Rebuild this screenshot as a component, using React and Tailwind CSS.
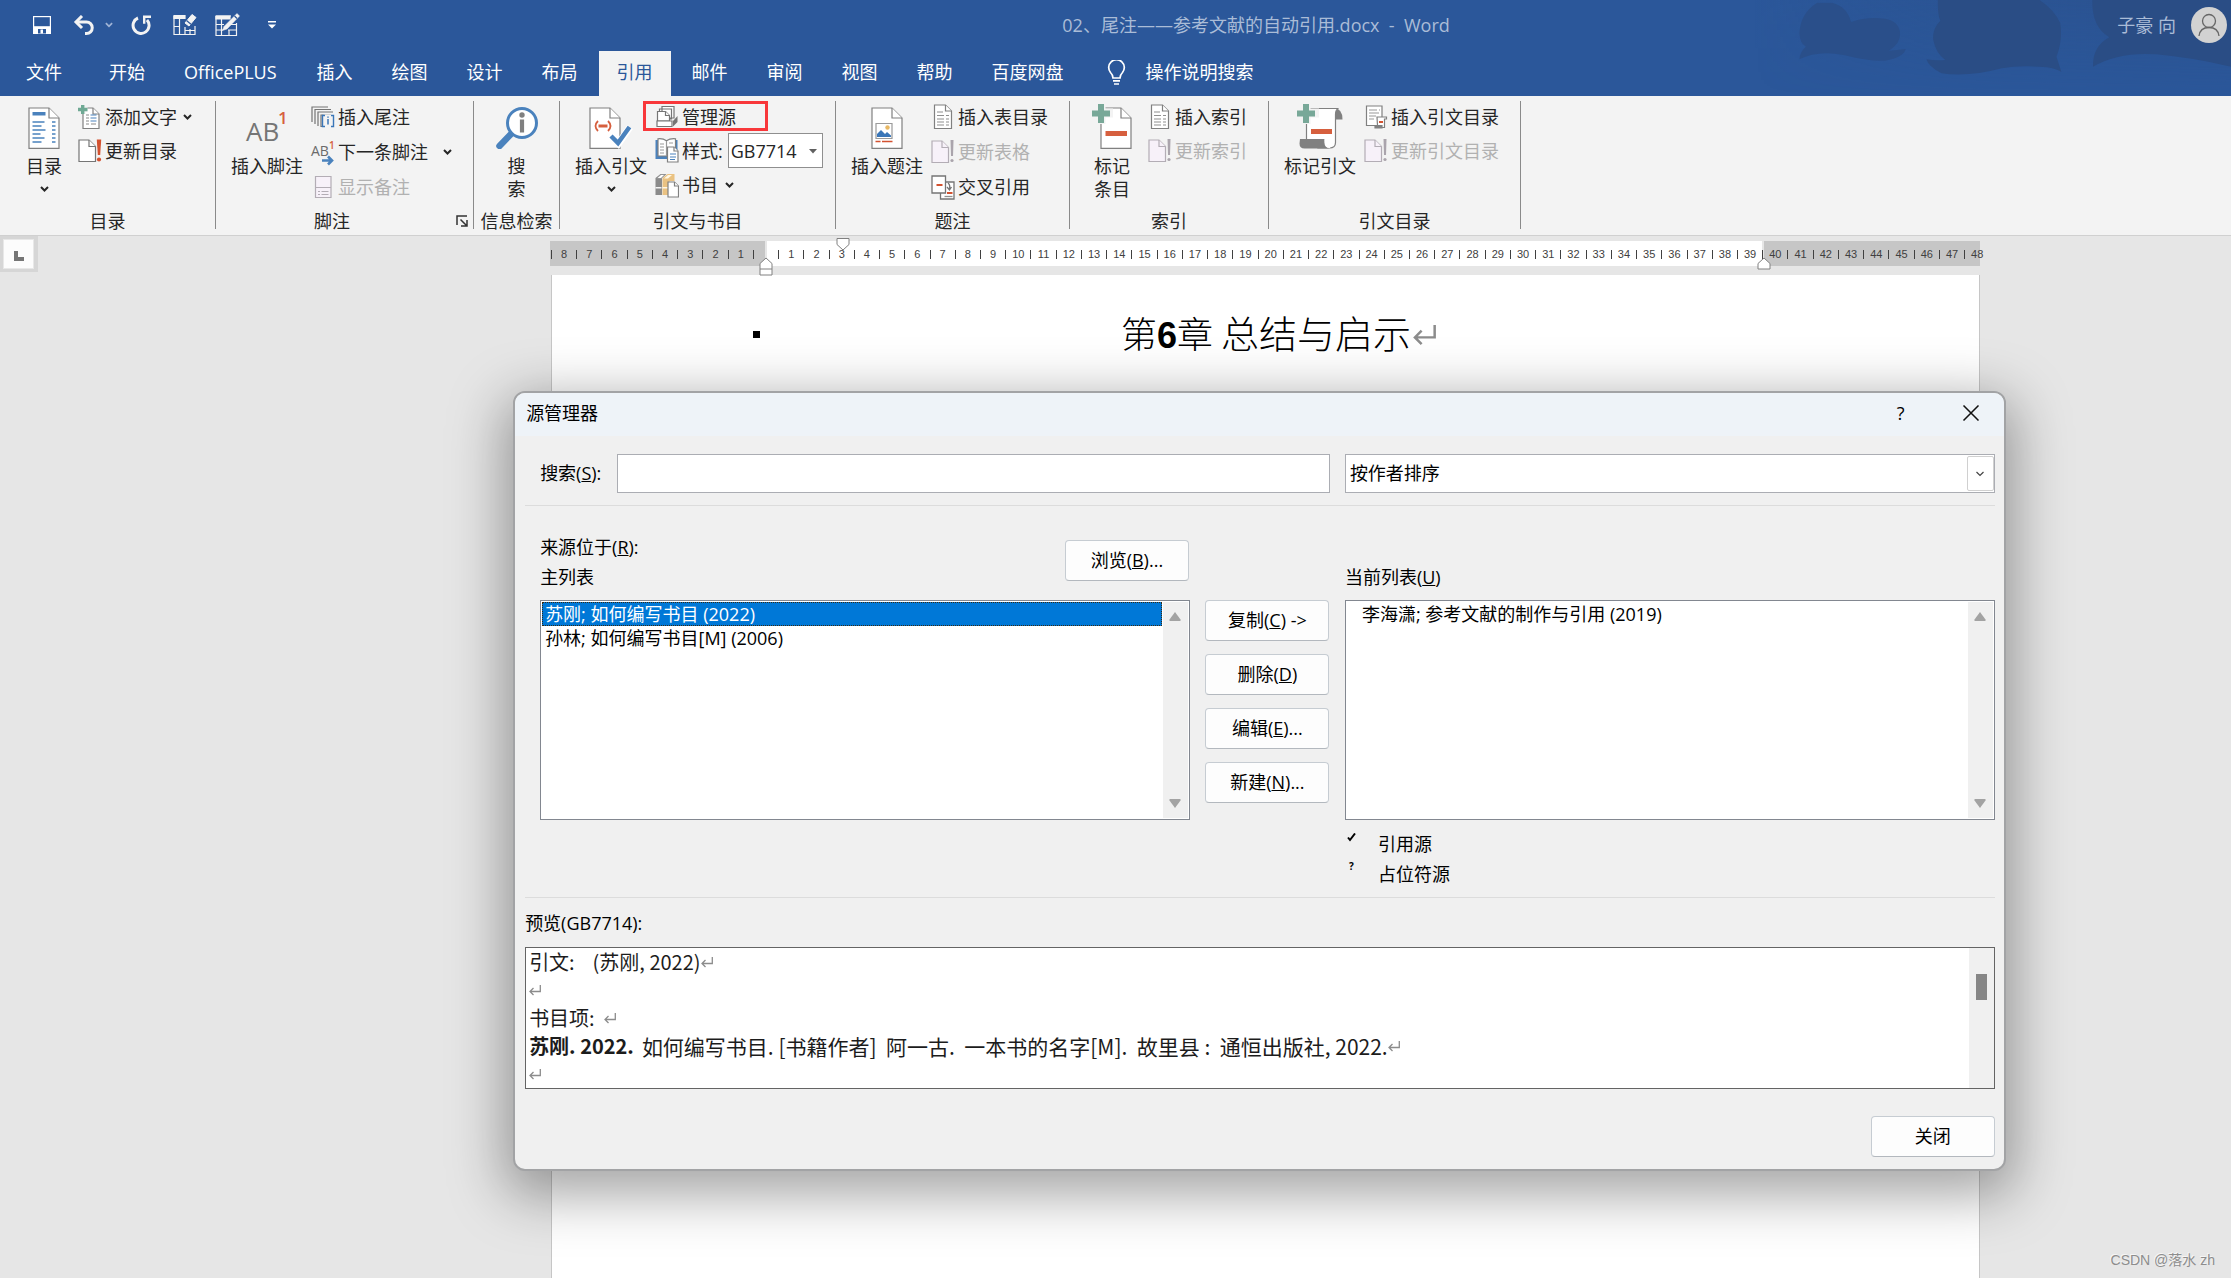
import React from "react";

const FONT = "font-['Open_Sans','Noto_Sans_CJK_SC',sans-serif]";

/* ---------- small drawings ---------- */

function Chevron({ className = "", w = 9, stroke = "currentColor", sw = 2 }) {
  return (
    <svg width={w} height="6" viewBox="0 0 9 6" fill="none" stroke={stroke} strokeWidth={sw} className={className} aria-hidden="true">
      <path d="M1 1l3.500 3.500L8 1" />
    </svg>
  );
}

function ReturnMark({ size = 12, className = "" }) {
  return (
    <svg width={size} height={size} viewBox="0 0 12 12" fill="none" stroke="#8c8c8c" strokeWidth="1.3" className={"inline-block shrink-0 " + className} aria-hidden="true">
      <path d="M11.300 1v6.500H1M4.500 4L1 7.500 4.500 11" />
    </svg>
  );
}

function SaveIcon() {
  return (
    <svg width="20" height="20" viewBox="0 0 20 20" aria-hidden="true">
      <path d="M1 1h18v18H1z" fill="#fff" stroke="none" />
      <path d="M2.200 2.200h15.600v9H2.200z" fill="#2b579a" />
      <path d="M6 14h8v4.500H6z" fill="#2b579a" />
      <path d="M8.500 14.500h2.500v4H8.500z" fill="#fff" />
    </svg>
  );
}

function UndoIcon() {
  return (
    <svg width="22" height="20" viewBox="0 0 22 20" fill="none" stroke="#f3f3f3" strokeWidth="3" aria-hidden="true">
      <path d="M3 7h10.500a5.500 5.500 0 0 1 0 11.500H12" />
      <path d="M9 1L3 7l6 6" />
    </svg>
  );
}

function RedoIcon() {
  return (
    <svg width="21" height="20" viewBox="0 0 21 20" fill="none" stroke="#f3f3f3" strokeWidth="3" aria-hidden="true">
      <path d="M7 3a8 8 0 1 0 9 2" />
      <path d="M20 1.800h-6.800v7" strokeWidth="2.400" />
    </svg>
  );
}

function TableEraserIcon() {
  return (
    <svg width="24" height="23" viewBox="0 0 24 23" fill="none" stroke="#f3f3f3" strokeWidth="1.200" aria-hidden="true">
      <path d="M1 3v18.500h21V13M1 3h11" />
      <path d="M1 2.500h11v3H1z" fill="#f3f3f3" />
      <path d="M6.500 5v16M12 14v7.500M17 16v5.500M12 17.500h10M1 13.500h5.500" />
      <path d="M12 10l7-8.500 4 3-7 8.500z" fill="#f3f3f3" strokeWidth="1" />
      <path d="M13.500 7.500l4.500 3.700" stroke="#2b579a" />
    </svg>
  );
}

function TablePenIcon() {
  return (
    <svg width="25" height="24" viewBox="0 0 25 24" fill="none" stroke="#f3f3f3" strokeWidth="1.200" aria-hidden="true">
      <path d="M1 3v19.500h20.500V10M1 3h15" />
      <path d="M1 3h14v3H1z" fill="#f3f3f3" />
      <path d="M1 11.500h8M1 17h7M6.500 6v16M14 17v5.500M16 11.500h5M13 17h8" />
      <path d="M22 .5l2.500 2.500-12.500 13-4.500 1.500 1.500-4z" fill="#f3f3f3" strokeWidth=".5" />
      <path d="M19.500 3l2.500 2.500" stroke="#2b579a" />
    </svg>
  );
}

function Page({ x, y, w, h, f, fill = "#fff", stroke = "#808080" }) {
  return (
    <g fill={fill} stroke={stroke} strokeWidth="1.2">
      <path d={`M${x} ${y}H${x + w - f}L${x + w} ${y + f}V${y + h}H${x}Z`} />
      <path d={`M${x + w - f} ${y}V${y + f}H${x + w}`} />
    </g>
  );
}

function TocIcon() {
  const rows = [21, 25, 29, 33, 37, 41];
  const lens = [12, 9, 13, 8, 12, 9];
  return (
    <svg width="32" height="48" viewBox="0 0 32 48" aria-hidden="true">
      <Page x={1} y={7} w={30} h={40.400} f={10} />
      <path d="M4.500 11h13v3.500h-13z" fill="#4a82bd" />
      {rows.map((y, i) => (
        <path key={y} d={`M4.500 ${y}h${lens[i]}M24 ${y}h3.500`} stroke="#4a82bd" strokeWidth="1.300" />
      ))}
    </svg>
  );
}

function AddTextIcon() {
  return (
    <svg width="24" height="26" viewBox="0 0 24 26" aria-hidden="true">
      <Page x={5} y={4} w={16} h={20.500} f={6} />
      <path d="M8 11h3M8 14h3M8 17h3M8 20h3M13 20h5" stroke="#8a8a8a" strokeWidth="1.2" />
      <path d="M12.500 11h6M12.500 14h6M12.500 17h6" stroke="#4a82bd" strokeWidth="1.2" />
      <path d="M4.500 0v10M0 5h9.500" stroke="#f3f3f3" strokeWidth="6" />
      <path d="M4.700 1v9M0 5.500h9.500" stroke="#6fa994" strokeWidth="3.400" />
    </svg>
  );
}

function UpdateIcon({ off }) {
  return (
    <svg width="24" height="24" viewBox="0 0 24 24" aria-hidden="true">
      <Page x={1} y={1} w={16.500} h={21.500} f={6.500} fill={off ? "#f7f1f9" : "#fff"} stroke={off ? "#b3adb5" : "#757575"} />
      <path d={off ? "M19.500 0h3l-.5 16h-2z" : "M18.800 .5h4.400l-1 15.500h-2.400z"} fill={off ? "#aaa4ac" : "#d35230"} />
      <circle cx="21" cy="20.500" r={off ? 1.600 : 2.100} fill={off ? "#aaa4ac" : "#d35230"} />
    </svg>
  );
}

function FootnoteIcon() {
  return (
    <svg width="46" height="48" viewBox="0 0 46 48" className="overflow-visible" aria-hidden="true">
      <text x="2" y="40" fontSize="26" fill="#757575" className={FONT}>AB</text>
      <text x="34" y="23" fontSize="17" fontWeight="600" fill="#d65f3e" className={FONT}>1</text>
    </svg>
  );
}

function EndnoteIcon() {
  return (
    <svg width="24" height="24" viewBox="0 0 24 24" fill="none" stroke="#757575" strokeWidth="1.2" aria-hidden="true">
      <path d="M1 17V2h16M4 19V4.500h16M7 21V7h15" />
      <path d="M11 21.500H10V10h10" />
      <path d="M12.500 9.500h10v12h-10z" fill="#f3f3f3" stroke="none" />
      <path d="M14 10.500h-2.500v11H14M20 10.500h2.500v11H20" stroke="#3a76b8" strokeWidth="1.400" />
      <path d="M17 14v5.500M17 11.500v1.200" stroke="#3a76b8" strokeWidth="1.500" />
    </svg>
  );
}

function NextFootnoteIcon() {
  return (
    <svg width="24" height="26" viewBox="0 0 24 26" className="overflow-visible" aria-hidden="true">
      <text x="0" y="17" fontSize="14" fill="#6a6a6a" className={FONT}>AB</text>
      <text x="18" y="10" fontSize="10" fontWeight="600" fill="#d65f3e" className={FONT}>1</text>
      <path d="M11 21.500h9M17 17.500l4 4-4 4" fill="none" stroke="#4a82bd" strokeWidth="2.600" />
    </svg>
  );
}

function ShowNotesIcon() {
  return (
    <svg width="24" height="24" viewBox="0 0 24 24" fill="#f7f1f9" stroke="#b3adb5" strokeWidth="1.2" aria-hidden="true">
      <path d="M4.500 1.500h15.500v21H4.500zM4.500 12.500H20" />
      <path d="M7 16.500h2M10.500 16.500h7M7 19.500h2M10.500 19.500h7" />
    </svg>
  );
}

function LookupIcon() {
  return (
    <svg width="44" height="48" viewBox="0 0 44 48" fill="none" aria-hidden="true">
      <path d="M4.500 45L17 32" stroke="#4a82bd" strokeWidth="6.500" strokeLinecap="round" />
      <circle cx="27" cy="22" r="14.500" fill="#fff" stroke="#4a82bd" strokeWidth="3" />
      <circle cx="27" cy="14" r="2.700" fill="#808080" />
      <path d="M27 18.500v13" stroke="#808080" strokeWidth="4.200" />
    </svg>
  );
}

function InsertCitationIcon() {
  return (
    <svg width="44" height="48" viewBox="0 0 44 48" fill="none" aria-hidden="true">
      <Page x={1} y={7} w={30} h={40.400} f={10} />
      <path d="M9 20q-5 5 0 10M19 20q5 5 0 10" stroke="#d65f3e" strokeWidth="1.800" />
      <path d="M9.500 25h9" stroke="#d65f3e" strokeWidth="3" />
      <path d="M22 35l7.500 7.500L41 26" stroke="#fff" strokeWidth="7" />
      <path d="M22 35l7 7L40.500 26" stroke="#4a82bd" strokeWidth="4.500" />
    </svg>
  );
}

function ManageSourcesIcon() {
  return (
    <svg width="24" height="24" viewBox="0 0 24 24" fill="#fff" stroke="#757575" strokeWidth="1.2" aria-hidden="true">
      <path d="M7 1.500h12V13H7zM4.500 4h12v10h-12z" />
      <path d="M2.500 6.500h8l4 4V16H2.500z" />
      <path d="M10.500 6.500v4h4" />
      <path d="M2 16h15v5.500H2z" />
      <path d="M18 16l4.500-5v6L18 21.500z" fill="#757575" stroke="none" />
    </svg>
  );
}

function StyleIcon() {
  return (
    <svg width="24" height="25" viewBox="0 0 24 25" fill="#fff" strokeWidth="1.2" aria-hidden="true">
      <path d="M.5 2h22v19H.5z" fill="#4a82bd" />
      <path d="M3 .8q5-.5 8.500 2Q15 .3 20.500.8V18h-9H3z" stroke="#808080" />
      <path d="M11.500 3v15M5 6h4M5 9h4M5 12h4M5 15h4M14 5h4" stroke="#9a9a9a" />
      <Page x={12.500} y={9} w={10.500} h={15} f={4} />
      <path d="M15 16h6M15 19h6M15 21.500h5" stroke="#4a82bd" />
    </svg>
  );
}

function BibliographyIcon() {
  return (
    <svg width="24" height="25" viewBox="0 0 24 25" aria-hidden="true">
      <path d="M.5 5l5-4h6l-4.500 4v17h-6.500z" fill="#8a8a8a" />
      <path d="M1.500 5.500l4.500-4h4l-4 4z" fill="#fff" stroke="#8a8a8a" strokeWidth=".8" />
      <path d="M.5 14h6v1.500h-6z" fill="#f3f3f3" />
      <path d="M7.500 5l5-4h7v7l-5 0v14H7.500z" fill="#eac282" />
      <path d="M9 5.500L13 2h4l-4 3.500z" fill="#fff7e4" />
      <path d="M7.500 14h6v1.500h-6z" fill="#fff7e4" />
      <Page x={13} y={9} w={10.500} h={15} f={4} />
    </svg>
  );
}

function CaptionIcon() {
  return (
    <svg width="32" height="48" viewBox="0 0 32 48" aria-hidden="true">
      <Page x={1} y={7} w={30} h={40.400} f={10} />
      <path d="M5 22.500h16v15H5z" fill="#fff" stroke="#9a9a9a" strokeWidth="1.2" />
      <path d="M6 36v-3l4-4 4 4 2-2 4 3.500V36z" fill="#3a76b8" />
      <circle cx="16.500" cy="26.500" r="2.200" fill="#e8b864" />
      <path d="M4.500 40.500h5M11 40.500h10.500" stroke="#d35230" strokeWidth="1.400" />
    </svg>
  );
}

function ListDocIcon() {
  return (
    <svg width="24" height="26" viewBox="0 0 24 26" aria-hidden="true">
      <Page x={3.500} y={1} w={17} h={23.500} f={6} />
      <path d="M6 8h6M6 11.500h7M6 15h7M6 18h7M6 21h7M15 11.500h3M15 15h3M15 18h3M15 21h3" stroke="#909090" strokeWidth="1.2" />
    </svg>
  );
}

function CrossRefIcon() {
  return (
    <svg width="24" height="25" viewBox="0 0 24 25" fill="#fff" stroke="#757575" strokeWidth="1.300" aria-hidden="true">
      <path d="M9.500 7h13.500v17H9.500z" />
      <path d="M1 1h13.500v17H1z" />
      <path d="M5.500 10h6M16 18h5.500" stroke="#d35230" strokeWidth="2" />
      <path d="M13.500 21.500h8" stroke="#909090" />
      <path d="M17 8q2.500 2 1.500 6M16 12l2.500 3 2-3" fill="none" />
    </svg>
  );
}

function MarkEntryIcon() {
  return (
    <svg width="44" height="48" viewBox="0 0 44 48" aria-hidden="true">
      <Page x={11} y={7} w={30} h={40.400} f={10} />
      <path d="M15.500 32.500h21.500" stroke="#d65f3e" strokeWidth="5" />
      <path d="M11 1v22M0 12h23" stroke="#f3f3f3" strokeWidth="9" />
      <path d="M11 3v19M2 12.500h18" stroke="#78a898" strokeWidth="6" />
    </svg>
  );
}

function MarkCitationIcon() {
  return (
    <svg width="48" height="48" viewBox="0 0 48 48" aria-hidden="true">
      <path d="M38 7.500q8.500-.5 8.500 11H38z" fill="#808080" />
      <path d="M10.500 7.500h32q-3 1-3 6v28q0 5.500-6 5.500H22l-11.500-5z" fill="#fff" stroke="#808080" strokeWidth="1.200" />
      <path d="M4 38h24.500q0 9.500 5.500 9.500H8.500q-5 0-5-5z" fill="#808080" />
      <path d="M28.500 38v4q0 5 5.500 5h.5" fill="#fff" />
      <path d="M15 30.500h21" stroke="#d65f3e" strokeWidth="5" />
      <path d="M10 1v22M0 12h23" stroke="#f3f3f3" strokeWidth="9" />
      <path d="M10 3v19M1 12.500h18" stroke="#78a898" strokeWidth="6" />
    </svg>
  );
}

function CitationTableIcon() {
  return (
    <svg width="24" height="24" viewBox="0 0 24 24" fill="#fff" stroke="#808080" strokeWidth="1.200" aria-hidden="true">
      <path d="M2.500 1h15.500v19.500H2.500z" />
      <path d="M5 5h8M5 8h10M5 11h7M5 14h5M15 5h1" stroke="#9a9a9a" />
      <path d="M13 12h9.500v2h-2v8.500H12v-2h1.500z" />
      <path d="M11 20.500h7v2.500h-7z" fill="#808080" />
      <path d="M15 17h4" stroke="#d35230" strokeWidth="2" />
    </svg>
  );
}

/* ---------- title bar and tabs ---------- */

const tabs = ["文件", "开始", "OfficePLUS", "插入", "绘图", "设计", "布局", "引用", "邮件", "审阅", "视图", "帮助", "百度网盘"];

function HeaderArt() {
  return (
    <svg className="absolute right-0 top-0 h-full w-[591px]" viewBox="0 0 1568 288" preserveAspectRatio="none" aria-hidden="true">
      <defs>
        <linearGradient id="haze" x1="0" x2="1" y1="0" y2="0">
          <stop offset="0" stopColor="#2a4d85" stopOpacity="0" />
          <stop offset=".5" stopColor="#2a4d85" stopOpacity=".3" />
          <stop offset="1" stopColor="#2a4d85" stopOpacity=".4" />
        </linearGradient>
        <linearGradient id="fade" x1="0" x2="0" y1="0" y2="1">
          <stop offset="0" stopColor="#fff" />
          <stop offset="1" stopColor="#fff" stopOpacity="0" />
        </linearGradient>
        <mask id="down"><rect width="1568" height="288" fill="url(#fade)" /></mask>
      </defs>
      <rect x="300" width="1268" height="288" fill="url(#haze)" mask="url(#down)" />
      <path d="M470 8Q425 40 423 100Q424 130 440 140Q424 155 423 178Q470 150 540 165Q610 185 650 182Q700 172 705 147Q680 150 660 152Q692 130 690 98Q686 62 650 56Q600 50 560 66Q550 20 510 8Z" fill="#2a4f8a" />
      <path d="M790 0Q790 50 797 62Q775 85 778 120Q785 160 810 180Q780 182 760 178Q765 200 800 220Q870 232 960 205Q1010 195 1080 202Q1110 208 1118 216L1105 170Q1122 120 1115 70Q1100 30 1060 0Z" fill="#2a4d85" />
      <path d="M1200 0Q1198 80 1245 112Q1200 140 1202 200Q1270 155 1370 163Q1460 172 1568 200V0Z" fill="#2a4d85" />
    </svg>
  );
}

function TitleBar() {
  return (
    <header className="relative h-24 overflow-hidden bg-[#2b579a] text-white">
      <HeaderArt />
      <div className="relative flex h-[49px] items-center">
        <div className="flex flex-[1046] items-center pl-8">
          <button aria-label="保存"><SaveIcon /></button>
          <button aria-label="撤消" className="ml-[21px]"><UndoIcon /></button>
          <button aria-label="撤消选项" className="ml-[10px]"><Chevron w={8} stroke="#9fb3d5" /></button>
          <button aria-label="重复" className="ml-[18px]"><RedoIcon /></button>
          <button aria-label="擦除表格" className="ml-[21px]"><TableEraserIcon /></button>
          <button aria-label="绘制表格" className="ml-[18px]"><TablePenIcon /></button>
          <button aria-label="自定义快速访问工具栏" className="ml-[28px]">
            <svg width="8" height="8" viewBox="0 0 8 8" fill="#fff" aria-hidden="true"><path d="M0 0h8v1.500H0zM0 3.500h8L4 7.500z" /></svg>
          </button>
        </div>
        <h1 className="whitespace-pre text-[18px] leading-6 text-[#aabcd7]">02、尾注——参考文献的自动引用.docx  -  Word</h1>
        <div className="flex flex-[789] items-center justify-end gap-[15px] pr-1">
          <span className="text-[18px] leading-6 text-[#aabcd7]">子豪 向</span>
          <button aria-label="帐户" className="flex size-9 items-end justify-center rounded-full bg-[#d2d2d2]">
            <svg width="36" height="36" viewBox="0 0 36 36" fill="none" stroke="#666" strokeWidth="1.300" aria-hidden="true">
              <circle cx="18" cy="14" r="6.500" />
              <path d="M8 29q1-8.500 10-8.500T28 29" />
            </svg>
          </button>
        </div>
      </div>
      <nav className="relative mt-[2px] flex h-[45px] gap-[3px] pl-2 text-[18px] leading-[42px]">
        {tabs.map((t) => (
          <button
            key={t}
            className={
              "flex items-start whitespace-nowrap px-[18px] " +
              (t === "引用" ? "bg-[#f3f3f3] text-[#2b579a]" : "") +
              (t === "文件" ? "mr-2" : "") +
              (t === "OfficePLUS" ? "mr-px" : "")
            }
          >
            {t}
          </button>
        ))}
        <button className="flex items-start gap-5 pl-[22px]">
          <svg width="19" height="25" viewBox="0 0 19 25" fill="none" stroke="#fff" strokeWidth="1.700" aria-hidden="true" className="mt-[9px]">
            <path d="M6 18q0-3-2.500-5.500A7.800 7.800 0 1 1 15.500 12.500Q13 15 13 18z" />
            <path d="M6 20.800h7M7 24h5" />
          </svg>
          <span>操作说明搜索</span>
        </button>
      </nav>
    </header>
  );
}

/* ---------- ribbon ---------- */

function Group({ label, className, labelClass = "", children, corner }) {
  return (
    <section aria-label={label} className={"flex h-32 shrink-0 flex-col border-r border-[#8a8a8a] " + className}>
      <div className="flex flex-1">{children}</div>
      <div className="flex h-4 items-center">
        <span className={"flex-1 whitespace-nowrap text-center leading-4 " + labelClass}>{label}</span>
        {corner}
      </div>
    </section>
  );
}

function Big({ icon, lines, chevron, className = "" }) {
  return (
    <button className={"flex shrink-0 flex-col items-center self-start whitespace-nowrap leading-[23px] " + className}>
      {icon}
      <span className="mt-[6px]">
        {lines.map((l) => <span key={l} className="block">{l}</span>)}
      </span>
      {chevron && <span className="flex h-[21px] items-center"><Chevron /></span>}
    </button>
  );
}

function Small({ icon, label, chevron = "", off, tall, children }) {
  return (
    <div className={"relative flex items-center pb-[3px] " + (tall ? "h-[35px]" : "h-[34px]")}>
      <button disabled={off} className={"flex items-center gap-[3px] whitespace-nowrap leading-6 " + (off ? "text-[#b1b1b1]" : "")}>
        <span className="flex w-6 justify-center">{icon}</span>
        {label}
        {chevron && <Chevron className={chevron} />}
      </button>
      {children}
    </div>
  );
}

function Ribbon() {
  return (
    <div className="flex h-[140px] border-b border-[#d0d0d0] bg-[#f3f3f3] pt-[5px] text-[18px] text-[#262626]">
      <Group label="目录" className="w-[216px]">
        <Big className="ml-5 w-12" icon={<TocIcon />} lines={["目录"]} chevron />
        <div className="ml-[10px]">
          <Small icon={<AddTextIcon />} label="添加文字" chevron="ml-[3px]" />
          <Small icon={<UpdateIcon />} label="更新目录" />
        </div>
      </Group>
      <Group
        label="脚注"
        className="w-[258px]"
        labelClass="pr-2"
        corner={
          <button aria-label="脚注和尾注选项" className="mr-[5px]">
            <svg width="12" height="12" viewBox="0 0 12 12" fill="none" stroke="#333" strokeWidth="1.500" aria-hidden="true">
              <path d="M1 10V1h10M4.500 4.500l6 6M11 5v6H5" />
            </svg>
          </button>
        }
      >
        <Big className="ml-[15px] w-[72px]" icon={<FootnoteIcon />} lines={["插入脚注"]} />
        <div className="ml-2">
          <Small tall icon={<EndnoteIcon />} label="插入尾注" />
          <Small tall icon={<NextFootnoteIcon />} label="下一条脚注" chevron="ml-3" />
          <Small tall off icon={<ShowNotesIcon />} label="显示备注" />
        </div>
      </Group>
      <Group label="信息检索" className="w-[86px]">
        <Big className="w-full" icon={<LookupIcon />} lines={["搜", "索"]} />
      </Group>
      <Group label="引文与书目" className="w-[276px]">
        <Big className="ml-[15px] w-[72px]" icon={<InsertCitationIcon />} lines={["插入引文"]} chevron />
        <div className="ml-2">
          <Small icon={<ManageSourcesIcon />} label="管理源">
            <span className="pointer-events-none absolute -left-3 top-0 h-[30px] w-[125px] border-3 border-[#f8373a]" />
          </Small>
          <div className="flex h-[34px] items-center gap-[3px] pb-[3px]">
            <span className="flex w-6 justify-center"><StyleIcon /></span>
            <label htmlFor="cite-style" className="mr-[2px] leading-6">样式:</label>
            <div className="relative flex">
              <select id="cite-style" className="h-[35px] w-[95px] appearance-none border border-[#8f8f8f] bg-white pl-[2px] leading-[30px] text-[#262626]">
                <option>GB7714</option>
              </select>
              <svg width="8" height="5" viewBox="0 0 8 5" fill="#606060" className="pointer-events-none absolute right-[6px] top-4" aria-hidden="true"><path d="M0 0h8L4 4.500z" /></svg>
            </div>
          </div>
          <Small tall icon={<BibliographyIcon />} label="书目" chevron="ml-[4px]" />
        </div>
      </Group>
      <Group label="题注" className="w-[234px]">
        <Big className="ml-[15px] w-[72px]" icon={<CaptionIcon />} lines={["插入题注"]} />
        <div className="ml-2">
          <Small tall icon={<ListDocIcon />} label="插入表目录" />
          <Small tall off icon={<UpdateIcon off />} label="更新表格" />
          <Small tall icon={<CrossRefIcon />} label="交叉引用" />
        </div>
      </Group>
      <Group label="索引" className="w-[199px]">
        <Big className="ml-[12px] w-[60px]" icon={<MarkEntryIcon />} lines={["标记", "条目"]} />
        <div className="ml-[6px]">
          <Small icon={<ListDocIcon />} label="插入索引" />
          <Small off icon={<UpdateIcon off />} label="更新索引" />
        </div>
      </Group>
      <Group label="引文目录" className="w-[252px]">
        <Big className="ml-[15px] w-[72px]" icon={<MarkCitationIcon />} lines={["标记引文"]} />
        <div className="ml-2">
          <Small icon={<CitationTableIcon />} label="插入引文目录" />
          <Small off icon={<UpdateIcon off />} label="更新引文目录" />
        </div>
      </Group>
    </div>
  );
}

/* ---------- ruler and page ---------- */

const rulerCells = [8, 7, 6, 5, 4, 3, 2, 1, 0, ...Array.from({ length: 48 }, (_, i) => i + 1)];

function Ruler() {
  return (
    <div className="relative mt-[5px] flex h-[25px] bg-white">
      <div className="absolute inset-y-0 left-0 w-[217px] border-r-2 border-[#e6e6e6] bg-[#c6c6c6]" />
      <div className="absolute inset-y-0 right-0 w-[218px] border-l-2 border-[#e6e6e6] bg-[#c6c6c6]" />
      <div className="relative -mr-[9px] ml-[1px] flex flex-1 items-center pt-px font-['Liberation_Sans',sans-serif] text-[11px] text-[#404040]">
        {rulerCells.map((n, i) => (
          <div key={i} className="flex h-[9px] min-w-0 flex-1 items-center justify-center border-l border-[#404040] leading-none">
            {n > 0 && n}
          </div>
        ))}
      </div>
      <svg width="14" height="13" viewBox="0 0 14 13" fill="#fff" stroke="#808080" className="absolute -top-[3px] left-[286px]" aria-hidden="true"><path d="M1 .5h12v6l-6 5.500-6-5.500z" /></svg>
      <svg width="14" height="19" viewBox="0 0 14 19" fill="#fff" stroke="#808080" className="absolute left-[209px] top-4" aria-hidden="true"><path d="M1 12V6.500L7 1l6 5.500V12zM1 12v6h12v-6" /></svg>
      <svg width="14" height="13" viewBox="0 0 14 13" fill="#fff" stroke="#808080" className="absolute right-[209px] top-4" aria-hidden="true"><path d="M1 12V6.500L7 1l6 5.500V12z" /></svg>
    </div>
  );
}

function Workspace() {
  return (
    <main className="grid flex-1 grid-cols-[550fr_1430fr_251fr] bg-[#e6e6e6]">
      <div>
        <button aria-label="制表符" className="flex h-9 w-[38px] items-center justify-start bg-[#d6d6d6] pl-[3px]">
          <span className="flex h-[30px] w-[31px] items-center justify-center border border-[#e8e8e8] bg-[#fcfcfc]">
            <svg width="10" height="10" viewBox="0 0 10 10" fill="none" stroke="#757575" strokeWidth="4" className="mt-1" aria-hidden="true"><path d="M2 0v8h8" /></svg>
          </span>
        </button>
      </div>
      <div className="flex min-w-0 flex-col">
        <Ruler />
        <article className="ml-[1px] mt-[9px] flex-1 border-x border-[#c6c6c6] bg-white pt-8">
          <h2 className="flex h-[54px] items-center pl-[201px] text-[36px] leading-[54px] text-black">
            <span className="mr-[361px] h-[7px] w-[7px] bg-black" />
            <span className="flex items-baseline font-['Noto_Sans_CJK_SC',sans-serif] font-light">
              <span>第</span>
              <span className="font-['Liberation_Sans',sans-serif] font-bold">6</span>
              <span className="mr-2">章</span>
              <span className="text-[38px]">总结与启示</span>
            </span>
            <ReturnMark size={23} className="ml-[2px]" />
          </h2>
        </article>
      </div>
      <div className="flex items-end justify-end pb-2 pr-4">
        <span className="font-['Liberation_Sans','Noto_Sans_CJK_SC',sans-serif] text-[14px] leading-5 text-[#8d8d8d] [text-shadow:-1px_-1px_0_#f6f6f6]">CSDN @落水 zh</span>
      </div>
    </main>
  );
}

/* ---------- source manager dialog ---------- */

function DialogButton({ children, className = "" }) {
  return (
    <button className={"h-[41px] w-[124px] rounded-[4px] border border-[#c6ccd2] border-b-[#b3b8be] bg-[#fdfdfd] pb-[2px] " + className}>
      {children}
    </button>
  );
}

function ScrollTrack() {
  return (
    <div className="my-[1px] mr-[1px] flex w-[25px] shrink-0 flex-col items-center justify-between bg-[#f0f0f0] py-[10px]">
      <svg width="12" height="9" viewBox="0 0 12 9" fill="#a3a3a3" aria-hidden="true"><path d="M6 0l5.500 7.500v1.500H.5V7.500z" /></svg>
      <svg width="12" height="9" viewBox="0 0 12 9" fill="#a3a3a3" aria-hidden="true"><path d="M.5 0h11v1.500L6 9 .5 1.500z" /></svg>
    </div>
  );
}

function SourceList({ items, selected, labelledBy, className = "" }) {
  return (
    <div className="flex h-[220px] w-full border border-[#828790] bg-white">
      <ul role="listbox" aria-labelledby={labelledBy} className="min-w-0 flex-1 px-[1px] pt-[1px]">
        {items.map((t, i) => (
          <li
            key={t}
            role="option"
            aria-selected={i === selected}
            className={
              "h-6 whitespace-nowrap border leading-[22px] " + className +
              (i === selected ? " border-dotted border-[#3a2a10] bg-[#0078d7] text-white" : " border-transparent")
            }
          >
            {t}
          </li>
        ))}
      </ul>
      <ScrollTrack />
    </div>
  );
}

function Dialog() {
  return (
    <div
      role="dialog"
      aria-labelledby="dlg-title"
      className="absolute left-[23%] right-[10.1%] top-[391px] flex flex-col overflow-hidden rounded-[12px] border-2 border-[#a2a3a5] bg-[#f0f0f0] text-[18px] leading-6 text-black shadow-[0_16px_56px_8px_rgba(0,0,0,0.36)]"
    >
      <div className="flex h-[43px] items-center bg-[#eef3f8] pb-[3px] pl-[11px] pr-6">
        <h2 id="dlg-title" className="flex-1">源管理器</h2>
        <button aria-label="帮助" className="w-8">?</button>
        <button aria-label="关闭窗口" className="ml-[45px]">
          <svg width="18" height="16" viewBox="0 0 18 16" stroke="#111" strokeWidth="1.500" aria-hidden="true"><path d="M1.500 0.500l15 15M16.500 0.500l-15 15" /></svg>
        </button>
      </div>

      <div className="pl-[10px] pr-[9px]">
        <div className="mt-[18px] grid grid-cols-[77px_713fr_665fr] items-center pl-[15px]">
          <label htmlFor="search" className="pb-[2px]">搜索(<u>S</u>):</label>
          <input id="search" className="h-[39px] w-full min-w-0 border border-[#abadb3] bg-white px-2" />
          <div className="relative ml-[15px] flex min-w-0">
            <select aria-label="排序" className="h-[39px] w-full appearance-none border border-[#abadb3] bg-white pb-[2px] pl-1">
              <option>按作者排序</option>
            </select>
            <span className="pointer-events-none absolute bottom-[2px] right-[1px] top-[2px] flex w-[27px] items-center justify-center rounded-[2px] border border-[#d0d0d0] bg-white">
              <Chevron w={12} stroke="#444" sw={1.2} />
            </span>
          </div>
        </div>
        <hr className="mt-3 border-[#dcdcdc]" />

        <div className="mt-[26px] grid grid-cols-[650fr_155px_650fr] pl-[15px]">
          <div className="flex items-start justify-between">
            <div className="leading-[30px]">
              <p>来源位于(<u>R</u>):</p>
              <p id="main-list">主列表</p>
            </div>
            <DialogButton className="mr-[1px] mt-[8px]">浏览(<u>B</u>)...</DialogButton>
          </div>
          <div />
          <p id="current-list" className="self-end leading-[30px]">当前列表(<u>U</u>)</p>

          <div className="mt-2">
            <SourceList labelledBy="main-list" selected={0} className="pl-[2px]" items={["苏刚; 如何编写书目 (2022)", "孙林; 如何编写书目[M] (2006)"]} />
          </div>
          <div className="mt-2 flex flex-col items-center gap-[13px]">
            <DialogButton>复制(<u>C</u>) -&gt;</DialogButton>
            <DialogButton>删除(<u>D</u>)</DialogButton>
            <DialogButton>编辑(<u>E</u>)...</DialogButton>
            <DialogButton>新建(<u>N</u>)...</DialogButton>
          </div>
          <div className="mt-2">
            <SourceList labelledBy="current-list" className="pl-[14px]" items={["李海潇; 参考文献的制作与引用 (2019)"]} />
            <div className="mt-[9px] leading-[30px]">
              <div className="flex gap-[22px] pl-[2px]">
                <svg width="9" height="9" viewBox="0 0 9 9" fill="none" stroke="#000" strokeWidth="2" className="mt-1" aria-hidden="true"><path d="M1 4.500l2 2.500L8 .5" /></svg>
                <span>引用源</span>
              </div>
              <div className="flex gap-[22px] pl-[2px]">
                <span className="w-[9px] text-center text-[10px] font-bold leading-[14px]">?</span>
                <span>占位符源</span>
              </div>
            </div>
          </div>
        </div>

        <hr className="mt-[8px] border-[#dcdcdc]" />
        <p id="preview" className="mt-[13px]">预览(GB7714):</p>
        <div aria-labelledby="preview" role="region" className="mt-[12px] flex h-[142px] border border-[#646464] bg-white font-['Noto_Sans_CJK_SC',sans-serif] text-[20px] leading-7 text-[#1c1c1c]">
          <div className="min-w-0 flex-1 whitespace-pre pl-[3px]">
            <p className="flex items-center">引文:    (苏刚, 2022)<ReturnMark /></p>
            <p className="flex h-7 items-center"><ReturnMark /></p>
            <p className="flex items-center">书目项:  <ReturnMark /></p>
            <p className="flex items-center text-[21px]">
              <b className="mr-2 text-[20px]">苏刚. 2022.</b>
              如何编写书目. [书籍作者]  阿一古.  一本书的名字[M].  故里县 :  通恒出版社, 2022.<ReturnMark />
            </p>
            <p className="flex h-7 items-center"><ReturnMark /></p>
          </div>
          <div className="flex w-[25px] justify-center bg-[#f0f0f0] pt-[26px]">
            <div className="h-[26px] w-[11px] bg-[#868686]" />
          </div>
        </div>
        <div className="mb-3 mt-[27px] flex justify-end">
          <DialogButton>关闭</DialogButton>
        </div>
      </div>
    </div>
  );
}

export default function App() {
  return (
    <div className={"relative flex min-h-screen flex-col overflow-hidden " + FONT}>
      <TitleBar />
      <Ribbon />
      <Workspace />
      <Dialog />
    </div>
  );
}
